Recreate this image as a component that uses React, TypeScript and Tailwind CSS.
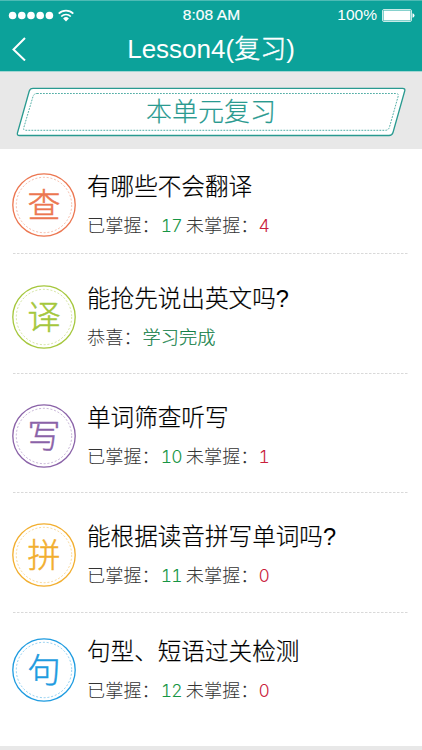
/**
 * 单元复习列表页
 */

interface ReviewItem {
  icon: string
  title: string
  known?: number
  unknown?: number
  result?: string
  iconColor: string
  rowClass: string
}

const items: ReviewItem[] = [
  { icon: '查', title: '有哪些不会翻译', known: 17, unknown: 4, iconColor: 'text-[#ec7650]', rowClass: 'h-[105px] pt-6' },
  { icon: '译', title: '能抢先说出英文吗?', result: '学习完成', iconColor: 'text-[#a5c73c]', rowClass: 'h-[120px] pt-[31px]' },
  { icon: '写', title: '单词筛查听写', known: 10, unknown: 1, iconColor: 'text-[#8a62a8]', rowClass: 'h-[119px] pt-[30px]' },
  { icon: '拼', title: '能根据读音拼写单词吗?', known: 11, unknown: 0, iconColor: 'text-[#f2ae2e]', rowClass: 'h-[120px] pt-[30px]' },
  { icon: '句', title: '句型、短语过关检测', known: 12, unknown: 0, iconColor: 'text-[#1d9be0]', rowClass: 'h-[133px] pt-[25px]' },
]

function StatusBar() {
  return (
    <div className="grid h-7 grid-cols-3 items-center pl-2 pr-[7px] text-white">
      <div className="flex items-center">
        <svg className="h-[9px] w-[46px]" viewBox="0 0 46 9" fill="currentColor">
          {[4.6, 13.8, 23, 32.2, 41.4].map((cx) => (
            <circle key={cx} cx={cx} cy="4.5" r="3.8" />
          ))}
        </svg>
        <svg className="ml-1 h-[13px] w-4" viewBox="0 0 16 13" fill="none" stroke="currentColor" strokeWidth="1.7">
          <path d="M0.7 4.7a10.4 10.4 0 0 1 14.6 0" />
          <path d="M3.2 7.5a6.8 6.8 0 0 1 9.6 0" />
          <path d="M5.1 9.5a4.1 4.1 0 0 1 5.8 0L8 12.5Z" fill="currentColor" stroke="none" />
        </svg>
      </div>
      <span className="whitespace-nowrap text-center text-[15.5px] leading-none tracking-[0.1px] [-webkit-text-stroke:0.2px_white]">8:08 AM</span>
      <div className="flex items-center justify-end">
        <span className="text-[15.5px] leading-none">100%</span>
        <svg className="ml-[5px] h-[13px] w-[33px]" viewBox="0 0 33 13">
          <rect x="0.5" y="0.5" width="29" height="12" rx="1.5" fill="none" stroke="#c9ebe7" />
          <rect x="1.5" y="1.5" width="27" height="10" rx="0.5" fill="#fff" />
          <path d="M30.5 4.2q2 .4 2 2.3t-2 2.3Z" fill="#fff" />
        </svg>
      </div>
    </div>
  )
}

function Header() {
  return (
    <header className="h-[72px] border-b border-t border-b-[#a3d6d2] border-t-[#4dbbb5] bg-[#0ca29a]">
      <StatusBar />
      <div className="grid h-10 grid-cols-[40px_1fr_40px] items-center text-white">
        <button className="ml-3" aria-label="返回">
          <svg className="h-6 w-[14px]" viewBox="0 0 14 24" fill="none" stroke="currentColor" strokeWidth="2">
            <path d="M13 1 1.5 12.5 13 23.5" />
          </svg>
        </button>
        <h1 className="text-center text-[26px] leading-10">
          Lesson4(<span className="font-light [-webkit-text-stroke:0.5px_white]">复习</span>)
        </h1>
      </div>
    </header>
  )
}

function UnitBanner() {
  return (
    <div className="relative h-[77px] bg-[#e8e8e8] pt-[17px]">
      {/* 平行四边形边框 */}
      <svg className="absolute left-0 top-0 h-[77px] w-[422px]" viewBox="0 0 422 77" fill="none" stroke="#299a90">
        <path d="M33 16.3H402.5q3 0 2.2 2.7L393 60.5q-.9 3-4 3H19.5q-2.7 0-2-2.8L29.2 19.2q.8-2.9 3.8-2.9Z" fill="#fff" strokeWidth="1.3" />
        <path d="M37 21.5H396q3 0 2.2 2.7L389.500 55q-1 3.300-4 3.300H25.500q-2.500 0-1.700-2.700L33 24.500q.9-3 4-3Z" strokeWidth="0.8" strokeDasharray="1.8 1.2" />
      </svg>
      <h2 className="relative text-center text-[26px] font-light leading-[47px] text-[#299a90] [-webkit-text-stroke:0.2px_#299a90]">
        本单元复习
      </h2>
    </div>
  )
}

function Count({ value, className }: { value?: number; className: string }) {
  return <span className={`font-['Inter'] text-[17.5px] font-light tabular-nums tracking-[-0.8px] ${className}`}>{value}</span>
}

function ReviewRow({ item, last }: { item: ReviewItem; last: boolean }) {
  return (
    <li className={`relative flex ${item.rowClass}`}>
      <div className={`relative size-16 shrink-0 text-center text-[33px] font-light leading-[65px] ${item.iconColor}`}>
        <svg className="absolute inset-0 size-16" viewBox="0 0 64 64" fill="none" stroke="currentColor">
          <circle cx="32" cy="32" r="31.2" strokeWidth="1.3" />
          <circle cx="32" cy="32" r="27.7" strokeWidth="0.8" strokeDasharray="2 1.8" opacity="0.6" />
        </svg>
        <span className="relative [-webkit-text-stroke:0.5px_currentColor]">{item.icon}</span>
      </div>
      <div className="ml-[11px] whitespace-nowrap pt-0.5 font-light">
        <h3 className="h-[25px] text-[23.6px] leading-[25px] text-black [-webkit-text-stroke:0.2px_black]">
          {item.title.replace('?', '')}
          {item.title.endsWith('?') && <span className="[-webkit-text-stroke:0]">?</span>}
        </h3>
        <p className="mt-3.5 h-6 text-[18.2px] leading-6 text-[#333]">
          {item.result ? (
            <>
              恭喜：<span className="ml-px text-[#128047] [-webkit-text-stroke:0.2px_#128047]">{item.result}</span>
            </>
          ) : (
            <>
              已掌握：
              <span className="inline-block w-[26px] pl-px">
                <Count value={item.known} className="text-[#169544]" />
              </span>
              未掌握：
              <Count value={item.unknown} className="text-[#c9203b]" />
            </>
          )}
        </p>
      </div>
      {!last && (
        <svg className="absolute bottom-0 left-px h-px w-[395px]" viewBox="0 0 395 1">
          <path d="M0 .5H395" stroke="#d9d9d9" strokeDasharray="2.5 1.5" />
        </svg>
      )}
    </li>
  )
}

export default function App() {
  return (
    <div className="h-[750px] w-[422px] overflow-hidden bg-white font-['Liberation_Sans','Noto_Sans_CJK_SC',sans-serif]">
      <Header />
      <UnitBanner />
      <ul className="pl-3">
        {items.map((item, index) => (
          <ReviewRow key={item.icon} item={item} last={index === items.length - 1} />
        ))}
      </ul>
      <div className="h-1 bg-[#e8e8e8]" />
    </div>
  )
}
